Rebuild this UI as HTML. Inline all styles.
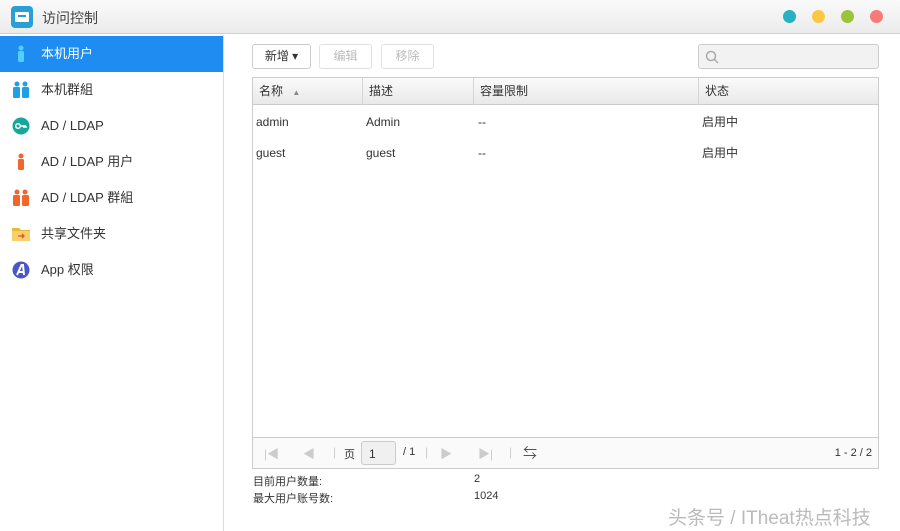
<!DOCTYPE html>
<html><head><meta charset="utf-8"><style>
*{margin:0;padding:0;box-sizing:border-box}
body{width:900px;height:531px;overflow:hidden;background:#fff;font-family:"Liberation Sans","Noto Sans CJK SC",sans-serif;font-size:12px;color:#333;position:relative}
.title{position:absolute;left:0;top:0;width:900px;height:34px;background:linear-gradient(#fafafa,#ebebeb);border-bottom:1px solid #cfcfcf}
.title .ic{position:absolute;left:11px;top:6px;width:22px;height:22px;border-radius:4px;background:#2a9fd6}
.title .t{position:absolute;left:42px;top:8px;font-size:14px;color:#444}
.dot{position:absolute;top:10px;width:13px;height:13px;border-radius:50%}
.side{position:absolute;left:0;top:35px;width:224px;height:496px;border-right:1px solid #ddd}
.item{position:absolute;left:0;width:223px;height:36px;line-height:36px;padding-left:41px;font-size:13px;color:#333}
.item.sel{background:#1e8cf0;color:#fff}
.item .i{position:absolute;left:12px;top:9px;width:18px;height:18px}
.btn{position:absolute;top:44px;height:25px;border:1px solid #ccc;border-radius:3px;background:#fff;text-align:center;line-height:23px;font-size:12px}
.dis{color:#bbb;border-color:#e2e2e2}
.search{position:absolute;left:698px;top:44px;width:181px;height:25px;border:1px solid #ccc;border-radius:3px;background:#f2f2f2}
.table{position:absolute;left:252px;top:77px;width:627px;height:392px;border:1px solid #ccc}
.hdr{position:absolute;left:0;top:0;width:625px;height:27px;background:linear-gradient(#fafafa,#e9e9e9);border-bottom:1px solid #ccc}
.hc{position:absolute;top:0;height:27px;line-height:27px;padding-left:6px;border-right:1px solid #d5d5d5;font-size:12px}
.cell{position:absolute;font-size:12px;line-height:14px;height:14px}
.pager{position:absolute;left:0;top:359px;width:625px;height:31px;border-top:1px solid #ccc;background:#fafafa}
.foot{position:absolute;font-size:11px}
</style></head><body>
<div class="title"><div class="ic"><div style="position:absolute;left:4px;top:6px;width:14px;height:10px;background:#fff;border-radius:1px"></div><div style="position:absolute;left:7px;top:9px;width:8px;height:2px;background:#2a9fd6"></div></div><div class="t">访问控制</div>
<div class="dot" style="left:783px;background:#27b1c1"></div>
<div class="dot" style="left:812px;background:#fcc843"></div>
<div class="dot" style="left:841px;background:#9cc43a"></div>
<div class="dot" style="left:870px;background:#f77a7a"></div>
</div>
<div class="side">
<div class="item sel" style="top:1px"><svg class="i" viewBox="0 0 18 18"><circle cx="9" cy="3" r="2.5" fill="#4fd0ff"/><rect x="6" y="6" width="6" height="11" rx="1.5" fill="#4fd0ff"/></svg>本机用户</div>
<div class="item" style="top:37px"><svg class="i" viewBox="0 0 18 18"><circle cx="5" cy="3" r="2.5" fill="#1ea0e8"/><circle cx="13" cy="3" r="2.5" fill="#1ea0e8"/><rect x="1" y="6" width="7" height="11" rx="1.5" fill="#1ea0e8"/><rect x="10" y="6" width="7" height="11" rx="1.5" fill="#1ea0e8"/></svg>本机群組</div>
<div class="item" style="top:73px"><svg class="i" viewBox="0 0 18 18"><circle cx="9" cy="9" r="8.5" fill="#17a89a"/><circle cx="6" cy="9" r="2.3" fill="none" stroke="#fff" stroke-width="1.5"/><path d="M8 9h6M12 9v2M14 9v2" stroke="#fff" stroke-width="1.5"/></svg>AD / LDAP</div>
<div class="item" style="top:109px"><svg class="i" viewBox="0 0 18 18"><circle cx="9" cy="3" r="2.5" fill="#f3652a"/><rect x="6" y="6" width="6" height="11" rx="1.5" fill="#f3652a"/></svg>AD / LDAP 用户</div>
<div class="item" style="top:145px"><svg class="i" viewBox="0 0 18 18"><circle cx="5" cy="3" r="2.5" fill="#f3652a"/><circle cx="13" cy="3" r="2.5" fill="#f3652a"/><rect x="1" y="6" width="7" height="11" rx="1.5" fill="#f3652a"/><rect x="10" y="6" width="7" height="11" rx="1.5" fill="#f3652a"/></svg>AD / LDAP 群組</div>
<div class="item" style="top:181px"><svg class="i" viewBox="0 0 18 18"><path d="M0 3h7l2 2h9v11H0z" fill="#e9b93c"/><rect x="0" y="6" width="18" height="10" fill="#f6d06a"/><path d="M6 11h6M10 9l2 2-2 2" stroke="#e0582a" stroke-width="1.3" fill="none"/></svg>共享文件夹</div>
<div class="item" style="top:217px"><svg class="i" viewBox="0 0 18 18"><circle cx="9" cy="9" r="8.5" fill="#4b55c8"/><path d="M5 14L9.5 4h1.5L12 14M7 11h5" stroke="#fff" stroke-width="2" fill="none"/></svg>App 权限</div>
</div>
<div class="btn" style="left:252px;width:59px">新增 ▾</div>
<div class="btn dis" style="left:319px;width:53px">编辑</div>
<div class="btn dis" style="left:381px;width:53px">移除</div>
<div class="search"><svg style="position:absolute;left:6px;top:5px" width="14" height="14" viewBox="0 0 14 14"><circle cx="6" cy="6" r="4.5" stroke="#aaa" stroke-width="1.5" fill="none"/><path d="M9.5 9.5L13 13" stroke="#aaa" stroke-width="1.5"/></svg></div>
<div class="table">
<div class="hdr">
<div class="hc" style="left:0;width:110px">名称 <span style="font-size:8px;color:#888;margin-left:6px">▲</span></div>
<div class="hc" style="left:110px;width:111px">描述</div>
<div class="hc" style="left:221px;width:225px">容量限制</div>
<div class="hc" style="left:446px;width:179px;border-right:none">状态</div>
</div>
<div class="cell" style="left:3px;top:37px">admin</div>
<div class="cell" style="left:113px;top:37px">Admin</div>
<div class="cell" style="left:225px;top:37px">--</div>
<div class="cell" style="left:449px;top:37px">启用中</div>
<div class="cell" style="left:3px;top:68px">guest</div>
<div class="cell" style="left:113px;top:68px">guest</div>
<div class="cell" style="left:225px;top:68px">--</div>
<div class="cell" style="left:449px;top:68px">启用中</div>
<div class="pager">
<span style="position:absolute;left:11px;top:7px;color:#ccc">|◀</span>
<span style="position:absolute;left:50px;top:7px;color:#ccc">◀</span>
<span style="position:absolute;left:80px;top:7px;color:#ccc">|</span>
<span style="position:absolute;left:91px;top:8px;font-size:11px">页</span>
<div style="position:absolute;left:108px;top:3px;width:35px;height:24px;border:1px solid #ccc;border-radius:3px;background:#f0f0f0;padding:5px 7px">1</div>
<span style="position:absolute;left:150px;top:8px;font-size:11px">/ 1</span>
<span style="position:absolute;left:172px;top:7px;color:#ccc">|</span>
<span style="position:absolute;left:187px;top:7px;color:#ccc">▶</span>
<span style="position:absolute;left:225px;top:7px;color:#ccc">▶|</span>
<span style="position:absolute;left:256px;top:7px;color:#ccc">|</span>
<span style="position:absolute;left:270px;top:5px;font-size:14px;color:#555">⇆</span>
<span style="position:absolute;right:6px;top:9px;font-size:11px">1 - 2 / 2</span>
</div>
</div>
<div class="foot" style="left:253px;top:473px">目前用户数量:</div>
<div class="foot" style="left:474px;top:473px">2</div>
<div class="foot" style="left:253px;top:490px">最大用户账号数:</div>
<div class="foot" style="left:474px;top:490px">1024</div>
<div style="position:absolute;left:668px;top:503px;font-size:19px;color:#bbb">头条号 / ITheat热点科技</div>
</body></html>
